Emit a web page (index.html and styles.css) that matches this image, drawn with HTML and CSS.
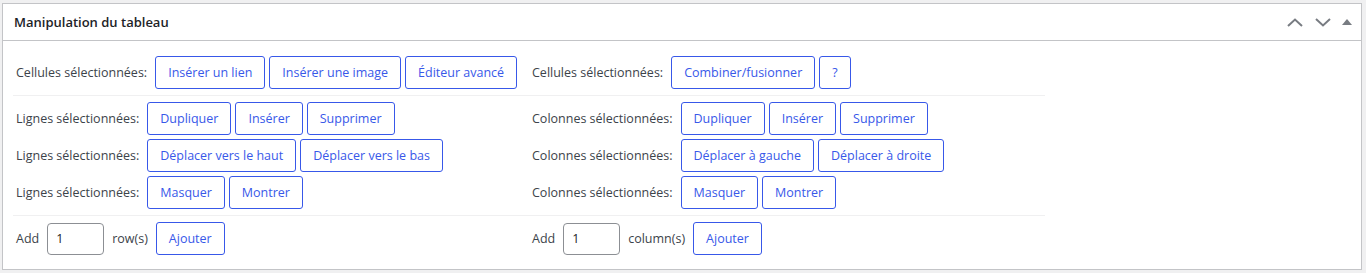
FILE: index.html
```html
<!DOCTYPE html>
<html lang="fr">
<head>
  <meta charset="UTF-8">
  <meta name="viewport" content="width=device-width, initial-scale=1.0">
  <title>Manipulation du tableau</title>
  <link rel="stylesheet" href="styles.css">
</head>
<body>

  <div class="postbox">
    <div class="postbox-header">
      <h2>Manipulation du tableau</h2>
      <div class="handle-actions">
        <button class="handle-btn" aria-label="Monter">
          <svg width="16" height="9" viewBox="0 0 16 9"><polyline points="1,8 8,1.5 15,8" /></svg>
        </button>
        <button class="handle-btn" aria-label="Descendre">
          <svg width="16" height="9" viewBox="0 0 16 9"><polyline points="1,1 8,7.5 15,1" /></svg>
        </button>
        <button class="handle-btn toggle" aria-label="Replier">
          <svg width="10" height="6" viewBox="0 0 10 6"><polygon points="0,6 5,0 10,6" /></svg>
        </button>
      </div>
    </div>

    <div class="inside">
      <!-- cells -->
      <div class="section">
        <div class="row">
          <div class="cell">
            <span class="label">Cellules sélectionnées:</span>
            <button class="btn">Insérer un lien</button>
            <button class="btn">Insérer une image</button>
            <button class="btn">Éditeur avancé</button>
          </div>
          <div class="cell">
            <span class="label">Cellules sélectionnées:</span>
            <button class="btn">Combiner/fusionner</button>
            <button class="btn">?</button>
          </div>
        </div>
      </div>

      <!-- rows / columns -->
      <div class="section">
        <div class="row">
          <div class="cell">
            <span class="label">Lignes sélectionnées:</span>
            <button class="btn">Dupliquer</button>
            <button class="btn">Insérer</button>
            <button class="btn">Supprimer</button>
          </div>
          <div class="cell">
            <span class="label">Colonnes sélectionnées:</span>
            <button class="btn">Dupliquer</button>
            <button class="btn">Insérer</button>
            <button class="btn">Supprimer</button>
          </div>
        </div>
        <div class="row">
          <div class="cell">
            <span class="label">Lignes sélectionnées:</span>
            <button class="btn">Déplacer vers le haut</button>
            <button class="btn">Déplacer vers le bas</button>
          </div>
          <div class="cell">
            <span class="label">Colonnes sélectionnées:</span>
            <button class="btn">Déplacer à gauche</button>
            <button class="btn">Déplacer à droite</button>
          </div>
        </div>
        <div class="row">
          <div class="cell">
            <span class="label">Lignes sélectionnées:</span>
            <button class="btn">Masquer</button>
            <button class="btn">Montrer</button>
          </div>
          <div class="cell">
            <span class="label">Colonnes sélectionnées:</span>
            <button class="btn">Masquer</button>
            <button class="btn">Montrer</button>
          </div>
        </div>
      </div>

      <!-- add -->
      <div class="section">
        <div class="row">
          <div class="cell add">
            <span class="label">Add</span>
            <input type="text" class="num" value="1">
            <span class="label">row(s)</span>
            <button class="btn">Ajouter</button>
          </div>
          <div class="cell add">
            <span class="label">Add</span>
            <input type="text" class="num" value="1">
            <span class="label">column(s)</span>
            <button class="btn">Ajouter</button>
          </div>
        </div>
      </div>
    </div>
  </div>

</body>
</html>
```

FILE: styles.css
```css
:root {
  --accent: #3858e9;
  --border: #c3c4c7;
  --text: #3c434a;
  --heading: #1d2327;
  --icon: #787c82;
}

body {
  margin: 0;
  padding: 3px 4px 0 2px;
  background-color: #f0f0f1;
  font-family: 'Open Sans', 'Noto Sans', sans-serif;
  font-size: 12.5px;
  color: var(--text);
}

.postbox {
  width: 1360px;
  height: 267px;
  box-sizing: border-box;
  background-color: #fff;
  border: 1px solid var(--border);
}

.postbox-header {
  height: 36px;
  display: flex;
  align-items: center;
  justify-content: space-between;
  border-bottom: 1px solid var(--border);
}

.postbox-header h2 {
  margin: 0;
  padding-left: 11px;
  font-size: 13px;
  font-weight: 600;
  color: var(--heading);
}

.handle-actions {
  display: flex;
  align-items: center;
  padding-right: 4px;
}

.handle-btn {
  width: 28px;
  height: 36px;
  padding: 0;
  border: none;
  background: none;
  display: flex;
  align-items: center;
  justify-content: center;
}

.handle-btn svg polyline {
  fill: none;
  stroke: var(--icon);
  stroke-width: 2;
}

.handle-btn svg polygon {
  fill: var(--icon);
}

.handle-btn.toggle {
  width: 20px;
}

.inside {
  margin-top: 13px;
  padding: 0 10px;
}

.section {
  width: 1032px;
  padding: 0 0 4px;
}

.section + .section {
  border-top: 1px solid #f0f0f1;
  padding-top: 4px;
}

.row {
  display: grid;
  grid-template-columns: 516px 516px;
  height: 37px;
}

.cell {
  display: flex;
  align-items: center;
  gap: 4px;
  padding-left: 3px;
}

.label {
  margin-right: 4px;
  white-space: nowrap;
}

.btn {
  height: 33px;
  padding: 0 12px;
  font-family: inherit;
  font-size: 12.5px;
  color: var(--accent);
  background-color: #fff;
  border: 1px solid var(--accent);
  border-radius: 3px;
  cursor: pointer;
  white-space: nowrap;
}

.btn:hover {
  background-color: #f6f7f7;
}

.add {
  gap: 8px;
}

.add .label {
  margin-right: 0;
}

.num {
  width: 57px;
  height: 32px;
  box-sizing: border-box;
  padding: 0 8px;
  font-family: inherit;
  font-size: 12.5px;
  color: var(--heading);
  border: 1px solid #8c8f94;
  border-radius: 4px;
}
```
